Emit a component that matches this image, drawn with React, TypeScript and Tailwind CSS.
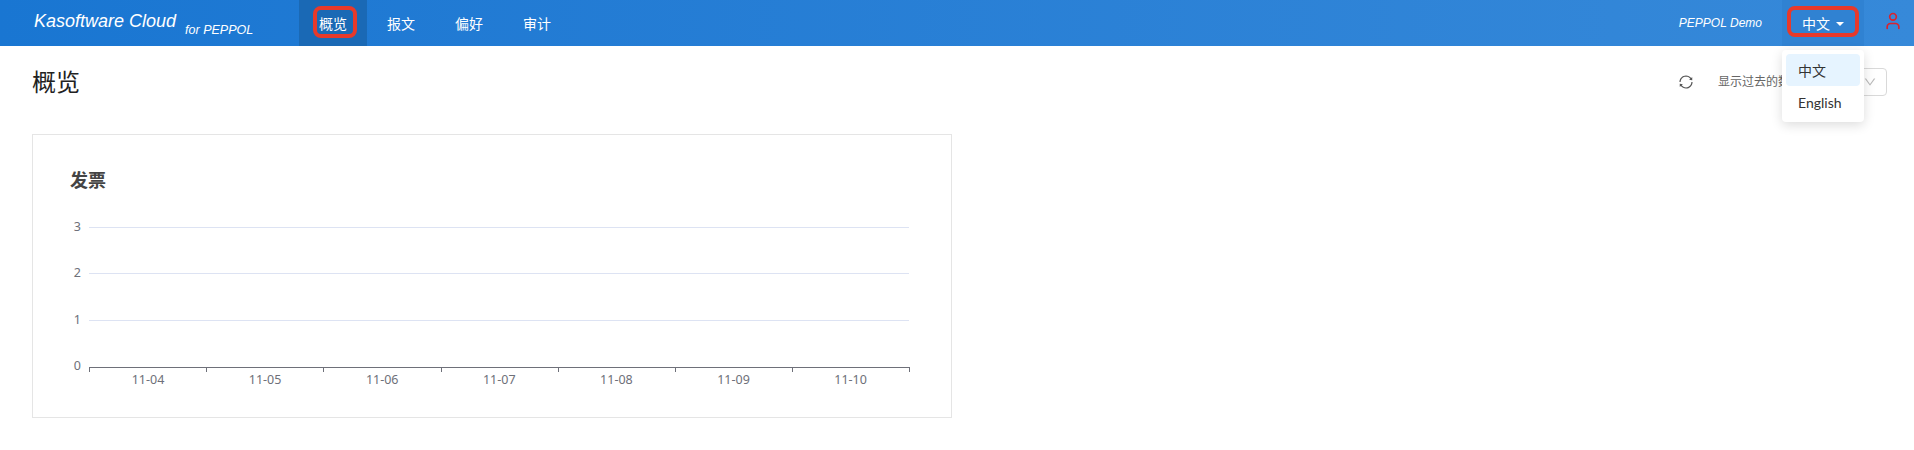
import { AiOutlineDown, AiOutlineSync } from 'react-icons/ai';
import { LuUser } from 'react-icons/lu';

const cjk = "font-['Noto_Sans','Noto_Sans_CJK_SC',sans-serif]";
const navItems = ['概览', '报文', '偏好', '审计'];
const hTicks = [89, 206, 323, 441, 558, 675, 792, 909];
const dates = ['11-04', '11-05', '11-06', '11-07', '11-08', '11-09', '11-10'];
const yTicks = [
  { label: '3', y: 227 },
  { label: '2', y: 273 },
  { label: '1', y: 320 },
];

const InvoiceChart = () => (
  <svg width="920" height="284" viewBox="32 134 920 284" className="block">
    {yTicks.map((t) => (
      <g key={t.label}>
        <line x1="89" x2="909" y1={t.y + 0.5} y2={t.y + 0.5} stroke="#dde3f3" />
        <text x="81" y={t.y + 4} textAnchor="end" fontSize="12.5" fill="#6e7079" fontFamily="Noto Sans">
          {t.label}
        </text>
      </g>
    ))}
    <text x="81" y="370" textAnchor="end" fontSize="12.5" fill="#6e7079" fontFamily="Noto Sans">
      0
    </text>
    <line x1="89" x2="910" y1="367.5" y2="367.5" stroke="#6e7079" />
    {hTicks.map((x) => (
      <line key={x} x1={x + 0.5} x2={x + 0.5} y1="367" y2="372" stroke="#6e7079" />
    ))}
    {dates.map((d, i) => (
      <text key={d} x={148 + i * 117.1} y="384" textAnchor="middle" fontSize="12.5" fill="#6e7079" fontFamily="Noto Sans">
        {d}
      </text>
    ))}
  </svg>
);

const App = () => {
  return (
    <div className={`relative h-[450px] overflow-hidden bg-white ${cjk}`}>
      {/* Header */}
      <header className="flex h-[46px] items-center bg-gradient-to-r from-[#1976d2] to-[#3689d9] text-white">
        <div className="flex w-[299px] -translate-y-[2px] items-baseline pl-[34px] font-['Liberation_Sans',sans-serif] italic">
          <span className="text-[18px]">Kasoftware Cloud</span>
          <span className="ml-[9px] translate-y-[7px] text-[12.5px]">for PEPPOL</span>
        </div>
        <nav className="flex h-full">
          {navItems.map((item, i) => (
            <div
              key={item}
              className={`relative flex h-full w-[68px] items-center justify-center text-[14px] ${i === 0 ? 'bg-[#1a69b5]' : ''}`}
            >
              {item}
              {i === 0 && (
                <span className="absolute left-[14px] top-[6px] h-[32px] w-[44px] rounded-[8px] border-[4px] border-[#e8392a]" />
              )}
            </div>
          ))}
        </nav>
        <div className="ml-auto flex h-full items-center">
          <span className="font-['Liberation_Sans',sans-serif] text-[12px] italic">PEPPOL Demo</span>
          <div className="relative ml-[20px] flex h-full w-[82px] items-center justify-center bg-[#3082d2] text-[14px]">
            中文
            <span className="ml-[6px] mt-[2px] border-x-[4px] border-t-[4px] border-x-transparent border-t-white" />
            <span className="absolute left-[5px] top-[6px] h-[31px] w-[72px] rounded-[8px] border-[4px] border-[#e8392a]" />
          </div>
          <LuUser className="ml-[19px] mr-[11px] -translate-y-[2px] text-[#d9232e]" size={20} />
        </div>
      </header>

      {/* Page title row */}
      <div className="flex items-center justify-between pl-[32px] pr-[27px] pt-[20px]">
        <h1 className="text-[24px] leading-[32px] text-[#222]">概览</h1>
        <div className="flex items-center">
          <AiOutlineSync className="text-[#555]" size={16} />
          <span className="ml-[24px] text-[12px] text-[#666]">显示过去的数据</span>
          <div className="ml-[8px] flex h-[28px] w-[77px] items-center justify-end rounded border border-[#d9d9d9] pr-[9px]">
            <AiOutlineDown className="text-[#bbb]" size={14} />
          </div>
        </div>
      </div>

      {/* Chart card */}
      <section className="relative ml-[32px] mt-[36px] h-[284px] w-[920px] border border-[#e5e5e5]">
        <h2 className="absolute left-[37px] top-[33px] text-[18px] font-bold leading-[24px] text-[#444]">发票</h2>
        <div className="-m-px">
          <InvoiceChart />
        </div>
      </section>

      {/* Language dropdown */}
      <div className="absolute left-[1782px] top-[50px] w-[82px] rounded bg-white p-[4px] text-[14px] text-[#333] shadow-[0_3px_12px_rgba(0,0,0,0.14)]">
        <div className="flex h-[32px] items-center rounded bg-[#e6f4ff] pl-[12px]">中文</div>
        <div className="flex h-[32px] items-center pl-[12px] font-['Lato','Noto_Sans_CJK_SC',sans-serif]">English</div>
      </div>
    </div>
  );
};

export default App;
